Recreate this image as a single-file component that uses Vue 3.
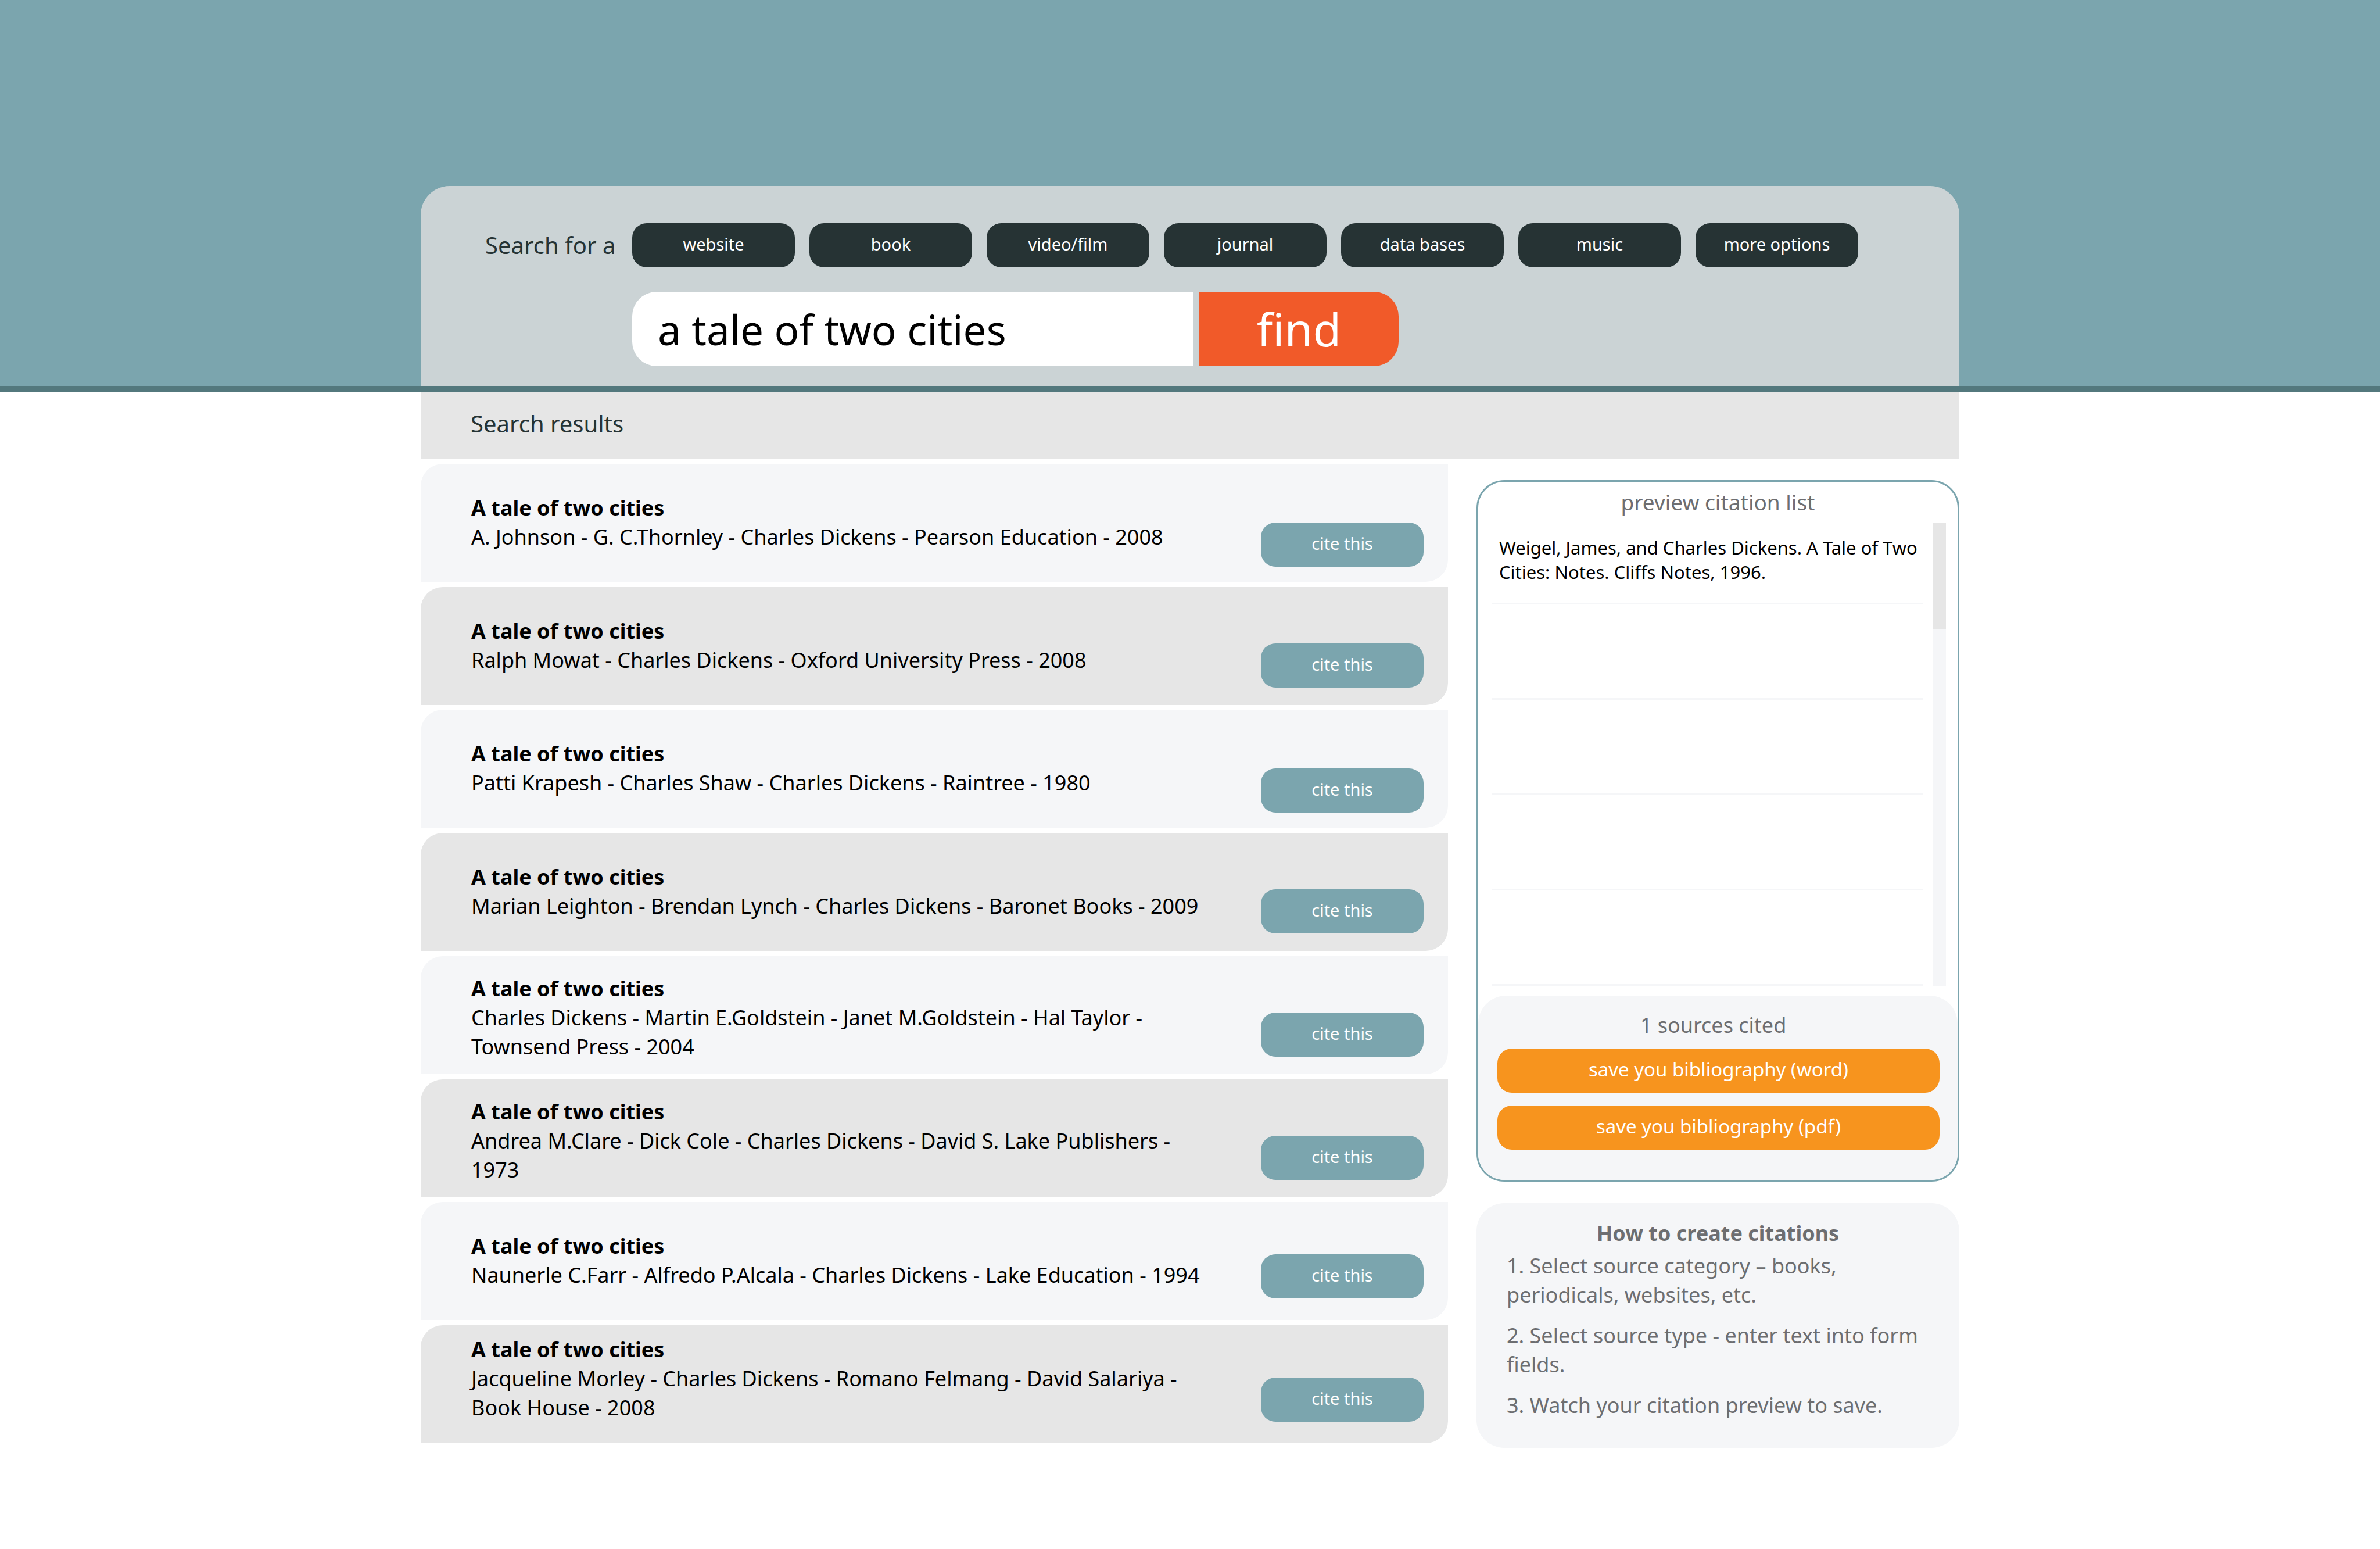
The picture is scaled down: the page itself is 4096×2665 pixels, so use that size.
<script setup>
import { ref } from 'vue'

const query = ref('a tale of two cities')

const sourceTypes = ['website', 'book', 'video/film', 'journal', 'data bases', 'music', 'more options']

const results = [
  { id: 1, details: 'A. Johnson - G. C.Thornley - Charles Dickens - Pearson Education - 2008', text: 'text-low', action: 'action-low' },
  { id: 2, details: 'Ralph Mowat - Charles Dickens - Oxford University Press - 2008', text: 'text-low', action: 'action-mid' },
  { id: 3, details: 'Patti Krapesh - Charles Shaw - Charles Dickens - Raintree - 1980', text: 'text-low', action: 'action-low' },
  { id: 4, details: 'Marian Leighton - Brendan Lynch - Charles Dickens - Baronet Books - 2009', text: 'text-low', action: 'action-mid' },
  { id: 5, details: 'Charles Dickens - Martin E.Goldstein - Janet M.Goldstein - Hal Taylor - Townsend Press - 2004', text: 'text-mid', action: 'action-mid' },
  { id: 6, details: 'Andrea M.Clare - Dick Cole - Charles Dickens - David S. Lake Publishers - 1973', text: 'text-mid', action: 'action-mid' },
  { id: 7, details: 'Naunerle C.Farr - Alfredo P.Alcala - Charles Dickens - Lake Education - 1994', text: 'text-low', action: 'action-high' },
  { id: 8, details: 'Jacqueline Morley - Charles Dickens - Romano Felmang - David Salariya - Book House - 2008', text: 'text-high', action: 'action-high' },
]

const citations = ['Weigel, James, and Charles Dickens. A Tale of Two Cities: Notes. Cliffs Notes, 1996.', '', '', '', '']

const steps = [
  'Select source category – books, periodicals, websites, etc.',
  'Select source type - enter text into form fields.',
  'Watch your citation preview to save.',
]
</script>

<template>
  <div class="page">
    <header class="masthead">
      <form class="search container" @submit.prevent>
        <label class="search-label" for="query">Search for a</label>
        <div class="types">
          <button v-for="type in sourceTypes" :key="type" class="pill pill-dark" type="button">{{ type }}</button>
        </div>
        <div class="search-row">
          <input id="query" v-model="query" class="search-input" type="text" />
          <button class="find" type="submit">find</button>
        </div>
      </form>
    </header>

    <h1 class="results-title container">Search results</h1>

    <main class="content container">
      <ul class="results">
        <li v-for="item in results" :key="item.id" class="result">
          <div class="result-text" :class="item.text">
            <h2>A tale of two cities</h2>
            <p>{{ item.details }}</p>
          </div>
          <button class="pill pill-teal" :class="item.action" type="button">cite this</button>
        </li>
      </ul>

      <aside class="sidebar">
        <section class="preview">
          <h2 class="preview-title">preview citation list</h2>
          <div class="preview-scroll">
            <ul class="citations">
              <li v-for="(citation, index) in citations" :key="index">{{ citation }}</li>
            </ul>
            <div class="track"><div class="thumb"></div></div>
          </div>
          <div class="export">
            <p class="count">1 sources cited</p>
            <button class="save" type="button">save you bibliography (word)</button>
            <button class="save" type="button">save you bibliography (pdf)</button>
          </div>
        </section>

        <section class="howto">
          <h2>How to create citations</h2>
          <ol>
            <li v-for="step in steps" :key="step">{{ step }}</li>
          </ol>
        </section>
      </aside>
    </main>
  </div>
</template>

<style>
body {
  background: #fff;
}
</style>

<style scoped>
.page {
  font-family: "Noto Sans", "Open Sans", sans-serif;
  font-size: 36px;
  line-height: 50px;
  color: #000;
}

.page *,
.page *::before {
  box-sizing: border-box;
}

h1,
h2,
p,
ul,
ol {
  margin: 0;
  padding: 0;
}

ul,
ol {
  list-style: none;
}

button,
input {
  margin: 0;
  border: 0;
  font-family: inherit;
}

button {
  cursor: pointer;
}

.container {
  width: 100%;
  max-width: 2648px;
  margin-left: auto;
  margin-right: auto;
}

.masthead {
  padding-top: 320px;
  background: #7ba5ae;
  border-bottom: 10px solid #53787d;
}

.search {
  display: grid;
  grid-template-columns: 228px 1fr;
  column-gap: 25px;
  row-gap: 42px;
  align-items: center;
  padding: 64px 111px 34px;
  border-radius: 50px 50px 0 0;
  background: #cbd3d5;
}

.search-label {
  font-size: 40px;
  color: #263334;
  white-space: nowrap;
}

.types {
  display: flex;
  gap: 25px;
}

.pill {
  flex: none;
  width: 280px;
  height: 76px;
  padding: 0 0 4px;
  border-radius: 25px;
  font-size: 29px;
  line-height: 40px;
  color: #fff;
}

.pill-dark {
  background: #263334;
}

.pill-teal {
  background: #7ba5ae;
}

.search-row {
  grid-column: 2;
  display: flex;
  gap: 10px;
}

.search-input {
  width: 966px;
  height: 128px;
  padding: 0 44px;
  border-radius: 42px 0 0 42px;
  background: #fff;
  font-size: 71px;
  color: #000;
  outline: 0;
}

.find {
  width: 343px;
  height: 128px;
  padding: 0;
  border-radius: 0 42px 42px 0;
  background: #f15a29;
  font-size: 79px;
  line-height: 100px;
  color: #fff;
}

.results-title {
  padding: 30px 86px 36px;
  background: #e6e6e6;
  font-size: 40px;
  font-weight: 400;
  color: #263334;
}

.content {
  display: flex;
  align-items: flex-start;
  gap: 49px;
  padding: 8px 0 175px;
}

.results {
  flex: 1;
  display: flex;
  flex-direction: column;
  justify-content: space-between;
  min-height: 1685px;
}

.result {
  display: flex;
  justify-content: space-between;
  align-items: flex-start;
  min-height: 203px;
  padding: 0 42px 0 87px;
  border-radius: 38px 0 38px 0;
  background: #f5f6f8;
}

.result:nth-child(even) {
  background: #e6e6e6;
}

.result-text {
  width: 1280px;
}

.result-text h2 {
  font-size: 36px;
  font-weight: 700;
}

.text-low {
  padding-top: 51px;
}

.text-mid {
  padding-top: 31px;
}

.text-high {
  padding-top: 17px;
}

.action-low {
  margin-top: 101px;
}

.action-mid {
  margin-top: 97px;
}

.action-high {
  margin-top: 90px;
}

.sidebar {
  width: 831px;
  padding-top: 28px;
  color: #6d6e71;
}

.preview {
  border: 3px solid #7ba5ae;
  border-radius: 48px;
  overflow: hidden;
}

.preview-title {
  padding: 10px 0 11px;
  font-size: 37px;
  font-weight: 400;
  text-align: center;
}

.preview-scroll {
  display: flex;
  gap: 18px;
  padding: 0 20px 0 24px;
  margin-bottom: 17px;
}

.citations {
  flex: 1;
}

.citations li {
  height: 164px;
  padding: 21px 0 0 12px;
  border-bottom: 3px solid #f5f6f8;
  font-size: 31px;
  line-height: 42px;
  color: #000;
}

.citations li:first-child {
  height: 140px;
}

.track {
  width: 22px;
  background: #f5f6f8;
}

.thumb {
  height: 183px;
  background: #e6e6e6;
}

.export {
  display: flex;
  flex-direction: column;
  padding: 26px 31px 52px 33px;
  border-radius: 48px 48px 0 0;
  background: #f5f6f8;
}

.count {
  margin-bottom: 15px;
  padding-right: 18px;
  text-align: center;
}

.save {
  height: 76px;
  padding: 0 0 4px;
  border-radius: 25px;
  background: #f7941e;
  font-size: 33px;
  line-height: 50px;
  color: #fff;
}

.save + .save {
  margin-top: 22px;
}

.howto {
  margin-top: 37px;
  padding: 27px 52px 48px;
  border-radius: 48px;
  background: #f5f6f8;
}

.howto h2 {
  margin-bottom: 6px;
  font-size: 36px;
  font-weight: 700;
  text-align: center;
}

.howto ol {
  counter-reset: step;
}

.howto li {
  counter-increment: step;
}

.howto li::before {
  content: counter(step) ". ";
}

.howto li + li {
  margin-top: 20px;
}
</style>
